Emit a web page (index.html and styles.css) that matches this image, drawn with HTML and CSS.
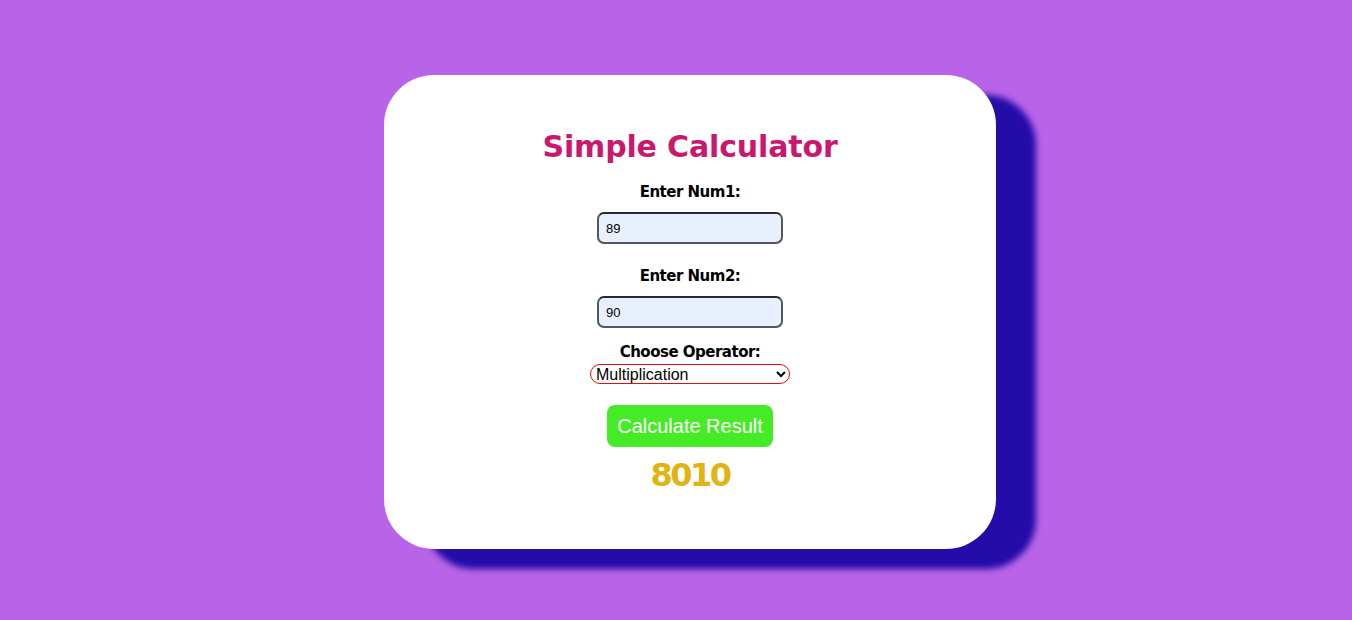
FILE: index.html
```html
<!DOCTYPE html>
<html>
<head>
<meta charset="utf-8">
<link rel="stylesheet" href="styles.css">
</head>
<body>
<div class="page">
  <div class="card">
    <h1 class="title">Simple Calculator</h1>
    <label class="label l1">Enter Num1:</label>
    <input class="num" type="text" value="89">
    <label class="label l2">Enter Num2:</label>
    <input class="num" type="text" value="90">
    <label class="label l3">Choose Operator:</label>
    <select class="op">
      <option>Addition</option>
      <option>Subtraction</option>
      <option selected>Multiplication</option>
      <option>Division</option>
    </select>
    <button class="calc">Calculate Result</button>
    <div class="result">8010</div>
  </div>
</div>
</body>
</html>
```
FILE: styles.css
```css
html, body {
  margin: 0;
  padding: 0;
  background: #b964e8;
  height: 100%;
}
.page {
  padding: 75px 0 0 384px;
}
.card {
  width: 612px;
  height: 474px;
  box-sizing: border-box;
  background: #fff;
  border-radius: 50px;
  box-shadow: 40px 20px 6px #240ca8;
  display: flex;
  flex-direction: column;
  align-items: center;
  padding-top: 50px;
  font-family: "DejaVu Sans", sans-serif;
}
.title {
  margin: 0;
  font-size: 30px;
  font-weight: 700;
  color: #c9186e;
  line-height: 44px;
  letter-spacing: -0.15px;
}
.label {
  font-weight: 700;
  font-size: 15px;
  color: #000;
  line-height: 20px;
  letter-spacing: -0.5px;
}
.l1 { margin-top: 13px; }
.l2 { margin-top: 22px; }
.l3 { margin-top: 14px; }
.num {
  margin-top: 10px;
  width: 186px;
  height: 32px;
  box-sizing: border-box;
  border: 2px solid #55575e;
  border-top-color: #2a2a2e;
  border-radius: 7px;
  background: #e8f0fe;
  font-family: "Liberation Sans", Arial, sans-serif;
  font-size: 13px;
  padding: 0 7px;
  color: #000;
  outline: none;
}
.op {
  margin-top: 2px;
  width: 200px;
  height: 20px;
  box-sizing: border-box;
  border: 1px solid #e01010;
  border-radius: 10px;
  background: #fff;
  font-family: "Liberation Sans", Arial, sans-serif;
  font-size: 16px;
  padding: 0 0 0 1px;
  color: #000;
}
.calc {
  margin-top: 21px;
  width: 166px;
  height: 42px;
  border: none;
  border-radius: 8px;
  background: #45ec26;
  color: #fff;
  font-family: "Liberation Sans", Arial, sans-serif;
  font-size: 20px;
  padding: 0;
}
.result {
  margin-top: 6px;
  font-size: 32px;
  font-weight: 700;
  color: #e0b512;
  line-height: 44px;
  letter-spacing: -2.5px;
}
```
